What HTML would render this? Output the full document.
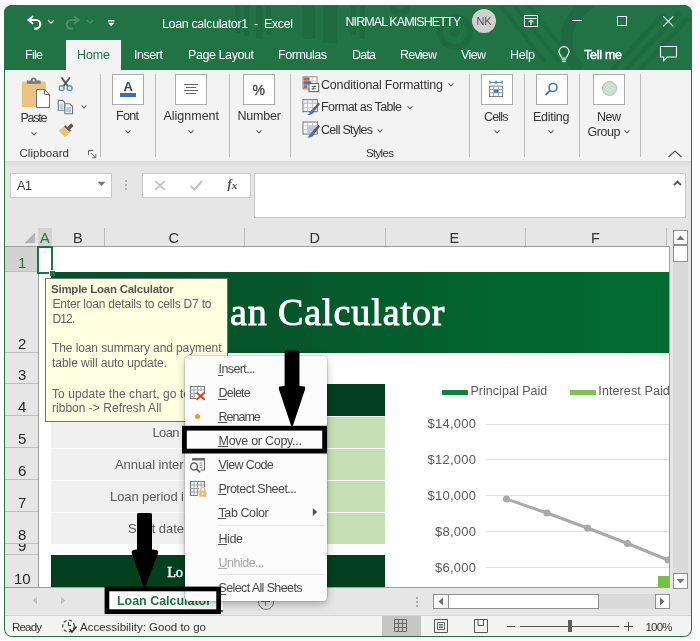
<!DOCTYPE html>
<html>
<head>
<meta charset="utf-8">
<title>Loan calculator1 - Excel</title>
<style>
html,body{margin:0;padding:0;}
body{width:700px;height:641px;overflow:hidden;background:#fdfdfd;font-family:"Liberation Sans",sans-serif;position:relative;}
.abs,.t{position:absolute;}
.t{white-space:pre;line-height:1;color:#262626;}
#win{position:absolute;left:4px;top:5px;width:688px;height:632px;border-radius:8px;overflow:hidden;background:#e6e6e6;}
#pg{position:absolute;left:-4px;top:-5px;width:700px;height:641px;will-change:transform;}
#winborder{position:absolute;left:4px;top:5px;width:686px;height:630px;border:1px solid #217346;border-radius:8px;pointer-events:none;}
.w{color:#fff;}
.sep{position:absolute;width:1px;background:#bdbdbd;top:73.5px;height:83px;}
.bigbtn{position:absolute;top:73px;width:30px;height:29px;background:#fff;border:1px solid #ababab;}
.chev{position:absolute;width:4px;height:4px;border-right:1.3px solid #555;border-bottom:1.3px solid #555;transform:rotate(45deg);}
</style>
</head>
<body>
<div id="win"><div id="pg">
<!-- TITLE + TABS -->
<div id="title" class="abs" style="left:0;top:0;width:700px;height:70px;background:#217346;overflow:hidden;">

<!-- subtle decorative pattern -->
<svg class="abs" style="left:0;top:0" width="700" height="70" viewBox="0 0 700 70">
  <g fill="#1e6b41">
    <rect x="235" y="5" width="5" height="28"/><rect x="244" y="5" width="5" height="31"/><rect x="256" y="5" width="6" height="34"/><rect x="266" y="5" width="5" height="30"/>
    <rect x="302" y="5" width="13" height="34"/><rect x="323" y="5" width="14" height="38"/>
    <rect x="351" y="5" width="5" height="30"/><rect x="360" y="5" width="5" height="34"/>
    <circle cx="455" cy="32" r="5"/>
  </g>
  <g fill="none" stroke="#1e6b41">
    <circle cx="455" cy="32" r="15" stroke-width="6"/>
    <circle cx="400" cy="5" r="8" stroke-width="6"/>
    <path d="M594 0 C 560 20 560 50 580 70" stroke-width="12"/>
    <path d="M500 5 L545 62 M514 5 L559 62 M528 5 L570 58" stroke-width="4"/>
    <path d="M640 70 L688 18 M626 70 L680 12 M612 70 L664 14" stroke-width="5"/>
  </g>
</svg>
<!-- undo -->
<svg class="abs" style="left:26px;top:14px" width="16" height="16" viewBox="0 0 16 16"><path d="M0.8 6 L6.6 1.4 L7.6 2.6 L4.6 6 L7.6 9.4 L6.6 10.6 Z" fill="#fff"/><path d="M3.5 6 H10 A4.3 4.3 0 0 1 10 14.6 H8.3" fill="none" stroke="#fff" stroke-width="2.2"/></svg>
<svg class="abs" style="left:47px;top:19px" width="8" height="6" viewBox="0 0 8 6"><path d="M1 1.2 L4 4.2 L7 1.2" fill="none" stroke="#fff" stroke-width="1.2"/></svg>
<!-- redo (dim) -->
<svg class="abs" style="left:65px;top:14px" width="16" height="16" viewBox="0 0 16 16"><path d="M15.2 6 L9.4 1.4 L8.4 2.6 L11.4 6 L8.4 9.4 L9.4 10.6 Z" fill="#4d9068"/><path d="M12.5 6 H6 A4.3 4.3 0 0 0 6 14.6 H7.7" fill="none" stroke="#4d9068" stroke-width="2.2"/></svg>
<svg class="abs" style="left:86px;top:19px" width="8" height="6" viewBox="0 0 8 6"><path d="M1 1.2 L4 4.2 L7 1.2" fill="none" stroke="#4d9068" stroke-width="1.2"/></svg>
<!-- qat customize -->
<svg class="abs" style="left:106px;top:18px" width="10" height="10" viewBox="0 0 10 10"><path d="M2 2.8 H8.4" stroke="#fff" stroke-width="1.3"/><path d="M2 4.8 H8.4 L5.2 8.2 Z" fill="#fff"/></svg>
<span class="t" style="left:162px;top:17.92px;font-size:12.5px;letter-spacing:-0.374px;color:#fff;">Loan calculator1  -  Excel</span>
<span class="t" style="left:345.5px;top:16.22px;font-size:12.5px;letter-spacing:-0.913px;color:#fff;">NIRMAL KAMISHETTY</span>
<div class="abs" style="left:472px;top:9px;width:24px;height:24px;border-radius:12px;background:#d2d0ce;"></div>
<span class="t" style="left:476.5px;top:16.19px;font-size:11px;letter-spacing:-0.281px;color:#555;">NK</span>
<!-- ribbon display options -->
<svg class="abs" style="left:523px;top:14px" width="16" height="14" viewBox="0 0 16 14"><rect x="1.5" y="1.5" width="13" height="11" fill="none" stroke="#fff" stroke-width="1"/><path d="M1.5 4.5 H14.5" stroke="#fff" stroke-width="1"/><path d="M8 6 V11 M5.6 8.2 L8 5.9 L10.4 8.2" stroke="#fff" stroke-width="1.1" fill="none"/></svg>
<div class="abs" style="left:572px;top:20px;width:10px;height:1px;background:#fff;"></div>
<div class="abs" style="left:617px;top:16.3px;width:8px;height:8px;border:1px solid #fff;"></div>
<svg class="abs" style="left:662px;top:15.2px" width="14" height="14" viewBox="0 0 14 14"><path d="M1.3 1.3 L11.3 11.3 M11.3 1.3 L1.3 11.3" stroke="#fff" stroke-width="1.1"/></svg>
<!-- tabs -->
<div class="abs" style="left:66px;top:40px;width:55px;height:30px;background:#f3f3f3;"></div>
<span class="t" style="left:25px;top:49.42px;font-size:12.5px;letter-spacing:-0.719px;color:#fff;">File</span>
<span class="t" style="left:77px;top:49.42px;font-size:12.5px;letter-spacing:-0.115px;color:#217346;">Home</span>
<span class="t" style="left:134px;top:49.42px;font-size:12.5px;letter-spacing:-0.453px;color:#fff;">Insert</span>
<span class="t" style="left:188px;top:49.42px;font-size:12.5px;letter-spacing:-0.420px;color:#fff;">Page Layout</span>
<span class="t" style="left:278px;top:49.42px;font-size:12.5px;letter-spacing:-0.442px;color:#fff;">Formulas</span>
<span class="t" style="left:352px;top:49.42px;font-size:12.5px;letter-spacing:-0.802px;color:#fff;">Data</span>
<span class="t" style="left:400px;top:49.42px;font-size:12.5px;letter-spacing:-0.800px;color:#fff;">Review</span>
<span class="t" style="left:461px;top:49.42px;font-size:12.5px;letter-spacing:-0.625px;color:#fff;">View</span>
<span class="t" style="left:510px;top:49.42px;font-size:12.5px;letter-spacing:-0.240px;color:#fff;">Help</span>
<!-- bulb -->
<svg class="abs" style="left:556px;top:45px" width="16" height="20" viewBox="0 0 16 20"><path d="M5.6 13 C5.6 10.8 3 9.8 3 6.6 A5 5 0 0 1 13 6.6 C13 9.8 10.4 10.8 10.4 13 Z" fill="none" stroke="#fff" stroke-width="1.1"/><path d="M5.8 14.8 H10.2 M6.3 16.6 H9.7" stroke="#fff" stroke-width="1"/></svg>
<span class="t" style="left:584px;top:49.42px;font-size:12.5px;letter-spacing:-0.266px;color:#fff;-webkit-text-stroke:0.45px #fff;">Tell me</span>
<!-- comment -->
<svg class="abs" style="left:659px;top:45px" width="19" height="18" viewBox="0 0 19 18"><path d="M1.5 1.5 H17.5 V12 H8.2 L4.6 15.6 V12 H1.5 Z" fill="none" stroke="#fff" stroke-width="1.1"/></svg>

</div>
<!-- RIBBON -->
<div id="ribbon" class="abs" style="left:0;top:69.5px;width:700px;height:91.5px;background:#f3f3f3;">
</div>

<div class="abs" id="ribc" style="left:0;top:0.5px;width:700px;height:0;">
<!-- Paste icon -->
<svg class="abs" style="left:20px;top:75px" width="32" height="33" viewBox="0 0 32 33">
  <rect x="1.8" y="5.5" width="24" height="25.5" rx="1.5" fill="#eac282"/>
  <path d="M6.8 7.8 V4.6 H10.6 A3 3 0 0 1 16.6 4.6 H20.6 V7.8 Z" fill="#7a7a7a"/><circle cx="13.6" cy="4.4" r="1.1" fill="#f3f3f3"/>
  <path d="M16.5 13.5 H24.5 L29.5 18.5 V31.5 H16.5 Z" fill="#fff" stroke="#6f6f6f" stroke-width="1"/>
  <path d="M24.5 13.5 V18.5 H29.5" fill="none" stroke="#6f6f6f" stroke-width="1"/>
</svg>
<span class="t" style="left:20.5px;top:111.92px;font-size:12.5px;letter-spacing:-1.242px;color:#333;">Paste</span>
<svg class="abs" style="left:30px;top:130px" width="8" height="6" viewBox="0 0 8 6"><path d="M1.5 1.4 L4 3.9 L6.5 1.4" fill="none" stroke="#606060" stroke-width="1.1"/></svg>
<!-- scissors -->
<svg class="abs" style="left:58px;top:75px" width="16" height="17" viewBox="0 0 16 17">
  <path d="M3.4 1.2 L10.2 10.6 M12 1.2 L5.2 10.6" stroke="#595959" stroke-width="1.9" fill="none"/>
  <circle cx="3.7" cy="12.2" r="2.4" fill="none" stroke="#6a94c9" stroke-width="1.5"/>
  <circle cx="11.6" cy="12.2" r="2.4" fill="none" stroke="#6a94c9" stroke-width="1.5"/>
</svg>
<!-- copy -->
<svg class="abs" style="left:57px;top:98px" width="18" height="17" viewBox="0 0 18 17">
  <path d="M1.3 1.4 H5.6 L7.8 3.6 V11.2 H1.3 Z" fill="#fff" stroke="#737373" stroke-width="1.1"/>
  <path d="M2.6 4.4 H6.4 V10 H2.6 Z" fill="#c2cfdb"/>
  <path d="M7.9 4.8 H12.8 L15.5 7.5 V14.8 H7.9 Z" fill="#fff" stroke="#737373" stroke-width="1.1"/>
  <path d="M9.2 8 H14.2 V13.6 H9.2 Z" fill="#b9c9d8"/>
</svg>
<svg class="abs" style="left:79.6px;top:103px" width="8" height="6" viewBox="0 0 8 6"><path d="M1.5 1.4 L4 3.9 L6.5 1.4" fill="none" stroke="#606060" stroke-width="1.1"/></svg>
<!-- format painter -->
<svg class="abs" style="left:58px;top:121px" width="18" height="17" viewBox="0 0 18 17">
  <path d="M10.6 6.2 L14.4 2.6" stroke="#5a5a5a" stroke-width="3.6" fill="none"/>
  <path d="M7.3 3.2 L13.3 8.2 L11.9 9.9 L5.9 4.9 Z" fill="#5f5f5f"/>
  <path d="M5.7 5.2 L11.7 10.2 L7 15.2 L0.6 8.6 Z" fill="#edc273"/>
</svg>
<span class="t" style="left:19.5px;top:147.77px;font-size:11.5px;letter-spacing:0.033px;color:#333;">Clipboard</span>
<svg class="abs" style="left:88px;top:149px" width="9" height="9" viewBox="0 0 9 9"><path d="M0.5 5 V0.5 H5" fill="none" stroke="#666" stroke-width="1"/><path d="M3 3 L7.5 7.5 M7.8 4 V7.8 H4" fill="none" stroke="#666" stroke-width="1"/></svg>
<div class="sep" style="left:100px"></div>
<!-- Font -->
<div class="bigbtn" style="left:112px"></div>
<span class="t" style="left:123.6px;top:79.60px;font-size:13px;color:#444;font-weight:700;">A</span>
<div class="abs" style="left:119.5px;top:92px;width:16px;height:4px;background:#3b6fb5;"></div>
<span class="t" style="left:116px;top:109.92px;font-size:12.5px;letter-spacing:-0.672px;color:#333;">Font</span>
<svg class="abs" style="left:123.5px;top:128px" width="8" height="6" viewBox="0 0 8 6"><path d="M1.5 1.4 L4 3.9 L6.5 1.4" fill="none" stroke="#606060" stroke-width="1.1"/></svg>
<div class="sep" style="left:155px"></div>
<!-- Alignment -->
<div class="bigbtn" style="left:175px"></div>
<div class="abs" style="left:184px;top:83.5px;width:14px;height:1px;background:#666;"></div>
<div class="abs" style="left:186px;top:86.5px;width:10px;height:1px;background:#666;"></div>
<div class="abs" style="left:184px;top:89.5px;width:14px;height:1px;background:#666;"></div>
<div class="abs" style="left:186px;top:92.5px;width:10px;height:1px;background:#666;"></div>
<span class="t" style="left:163.5px;top:109.92px;font-size:12.5px;letter-spacing:-0.012px;color:#333;">Alignment</span>
<svg class="abs" style="left:187px;top:128px" width="8" height="6" viewBox="0 0 8 6"><path d="M1.5 1.4 L4 3.9 L6.5 1.4" fill="none" stroke="#606060" stroke-width="1.1"/></svg>
<div class="sep" style="left:229px"></div>
<!-- Number -->
<div class="bigbtn" style="left:243px"></div>
<span class="t" style="left:252.5px;top:82.65px;font-size:14px;color:#444;-webkit-text-stroke:0.35px #444;">%</span>
<span class="t" style="left:237.5px;top:109.92px;font-size:12.5px;letter-spacing:-0.194px;color:#333;">Number</span>
<svg class="abs" style="left:255px;top:128px" width="8" height="6" viewBox="0 0 8 6"><path d="M1.5 1.4 L4 3.9 L6.5 1.4" fill="none" stroke="#606060" stroke-width="1.1"/></svg>
<div class="sep" style="left:290px"></div>
<!-- Styles -->
<svg class="abs" style="left:301.8px;top:75px" width="18" height="17" viewBox="0 0 18 17">
  <rect x="1" y="0.8" width="14" height="12.2" fill="#fff" stroke="#8a8a8a" stroke-width="1"/>
  <path d="M5.6 1 V13 M10.4 1 V13 M1 5 H15 M1 9 H15" stroke="#c9c9c9" stroke-width="0.9"/>
  <rect x="1.5" y="1.4" width="6" height="3.3" fill="#d65a38"/><rect x="1.5" y="5.2" width="7.6" height="3.4" fill="#3f74c2"/><rect x="1.5" y="9.1" width="3.6" height="3.4" fill="#d65a38"/>
  <rect x="7" y="7.6" width="9.6" height="8" fill="#fff" stroke="#666" stroke-width="1.1"/>
  <path d="M9.6 10.6 H14 M9.6 12.8 H14 M13 9.4 L10.6 14" stroke="#555" stroke-width="0.9"/>
</svg>
<span class="t" style="left:321px;top:78.42px;font-size:12.5px;letter-spacing:-0.179px;color:#333;">Conditional Formatting</span>
<svg class="abs" style="left:447px;top:81.5px" width="8" height="6" viewBox="0 0 8 6"><path d="M1.5 1.4 L4 3.9 L6.5 1.4" fill="none" stroke="#606060" stroke-width="1.1"/></svg>
<svg class="abs" style="left:301.8px;top:98px" width="19" height="18" viewBox="0 0 19 18">
  <rect x="1" y="0.6" width="14.4" height="12" fill="#fff" stroke="#7d7d7d" stroke-width="1.1"/>
  <rect x="1.6" y="1.2" width="13.2" height="3" fill="#e1e5ea"/>
  <path d="M5.7 0.6 V12.6 M10.5 0.6 V12.6 M1 4.6 H15.4 M1 8.6 H15.4" stroke="#bdbdbd" stroke-width="0.9"/>
  <path d="M16.6 3.4 L18 5 L12.6 11.8 L10.4 10.2 Z" fill="#5c5c5c"/>
  <path d="M10.4 10.2 L12.6 11.8 C12.2 14.6 8.6 16.6 5.2 16 C7.6 14.8 8 11.8 10.4 10.2 Z" fill="#3b78c4"/>
</svg>
<span class="t" style="left:321px;top:100.92px;font-size:12.5px;letter-spacing:-0.600px;color:#333;">Format as Table</span>
<svg class="abs" style="left:405.5px;top:104px" width="8" height="6" viewBox="0 0 8 6"><path d="M1.5 1.4 L4 3.9 L6.5 1.4" fill="none" stroke="#606060" stroke-width="1.1"/></svg>
<svg class="abs" style="left:301.8px;top:120px" width="19" height="18" viewBox="0 0 19 18">
  <rect x="1" y="1" width="14.4" height="12" fill="#fff" stroke="#7d7d7d" stroke-width="1.1"/>
  <rect x="5.6" y="4.8" width="9.2" height="7.6" fill="#bccbe4"/>
  <path d="M5.7 1 V13 M10.5 1 V13 M1 4.8 H15.4 M1 8.8 H15.4" stroke="#c4c4c4" stroke-width="0.9"/>
  <path d="M16.6 3.8 L18 5.4 L12.6 12.2 L10.4 10.6 Z" fill="#5c5c5c"/>
  <path d="M10.4 10.6 L12.6 12.2 C12.2 15 8.6 17 5.2 16.4 C7.6 15.2 8 12.2 10.4 10.6 Z" fill="#3b78c4"/>
</svg>
<span class="t" style="left:321px;top:123.42px;font-size:12.5px;letter-spacing:-0.705px;color:#333;">Cell Styles</span>
<svg class="abs" style="left:376px;top:127px" width="8" height="6" viewBox="0 0 8 6"><path d="M1.5 1.4 L4 3.9 L6.5 1.4" fill="none" stroke="#606060" stroke-width="1.1"/></svg>
<span class="t" style="left:366px;top:147.77px;font-size:11.5px;letter-spacing:-0.666px;color:#333;">Styles</span>
<div class="sep" style="left:469px"></div>
<!-- Cells -->
<div class="bigbtn" style="left:481px"></div>
<svg class="abs" style="left:488px;top:78.5px" width="17" height="19" viewBox="0 0 18 20">
  <path d="M2 3.5 H15 M2 1.5 V5.5 M15 1.5 V5.5 M8.5 1.5 V5.5" stroke="#3b78c4" stroke-width="1" fill="none"/>
  <rect x="1.5" y="7.5" width="14" height="11" fill="#fff" stroke="#777" stroke-width="1"/>
  <path d="M1.5 11 H15.5 M1.5 14.5 H15.5 M6 7.5 V18.5 M11 7.5 V18.5" stroke="#999" stroke-width="1"/>
  <rect x="6.5" y="11.5" width="4.5" height="3" fill="#3b78c4"/>
</svg>
<span class="t" style="left:484px;top:110.42px;font-size:12.5px;letter-spacing:-0.824px;color:#333;">Cells</span>
<svg class="abs" style="left:492.5px;top:128px" width="8" height="6" viewBox="0 0 8 6"><path d="M1.5 1.4 L4 3.9 L6.5 1.4" fill="none" stroke="#606060" stroke-width="1.1"/></svg>
<div class="sep" style="left:524px"></div>
<!-- Editing -->
<div class="bigbtn" style="left:536px"></div>
<svg class="abs" style="left:543px;top:80px" width="17" height="17" viewBox="0 0 17 17"><circle cx="10" cy="6.5" r="4" fill="none" stroke="#3b78c4" stroke-width="1.6"/><path d="M7 9.5 L2.5 14" stroke="#3b78c4" stroke-width="2"/></svg>
<span class="t" style="left:533px;top:110.42px;font-size:12.5px;letter-spacing:-0.289px;color:#333;">Editing</span>
<svg class="abs" style="left:547px;top:128px" width="8" height="6" viewBox="0 0 8 6"><path d="M1.5 1.4 L4 3.9 L6.5 1.4" fill="none" stroke="#606060" stroke-width="1.1"/></svg>
<div class="sep" style="left:579px"></div>
<!-- New Group -->
<div class="bigbtn" style="left:593.4px"></div>
<div class="abs" style="left:601.6px;top:80.8px;width:13px;height:13px;border-radius:9px;background:#c9e0d2;border:1.3px solid #a6c3b2;"></div>
<span class="t" style="left:597px;top:110.42px;font-size:12.5px;letter-spacing:-0.508px;color:#333;">New</span>
<span class="t" style="left:587.5px;top:125.92px;font-size:12.5px;letter-spacing:-0.438px;color:#333;">Group</span>
<svg class="abs" style="left:623px;top:128.5px" width="8" height="6" viewBox="0 0 8 6"><path d="M1.5 1.4 L4 3.9 L6.5 1.4" fill="none" stroke="#606060" stroke-width="1.1"/></svg>
<div class="sep" style="left:640px"></div>
<svg class="abs" style="left:667px;top:148px" width="16" height="10" viewBox="0 0 16 10"><path d="M1.5 8 L8 2 L14.5 8" fill="none" stroke="#555" stroke-width="1.2"/></svg>

</div>
<!-- FORMULA BAR -->

<div class="abs" style="left:0;top:161px;width:700px;height:6px;background:linear-gradient(180deg,#dadada,#e6e6e6);"></div>
<!-- name box -->
<div class="abs" style="left:10px;top:172.5px;width:100px;height:23.5px;background:#fff;border:1px solid #c8c8c8;"></div>
<span class="t" style="left:17px;top:179.92px;font-size:12.5px;letter-spacing:-0.297px;color:#333;">A1</span>
<svg class="abs" style="left:97px;top:181px" width="9" height="6" viewBox="0 0 9 6"><path d="M0.5 0.8 H8.5 L4.5 5 Z" fill="#777"/></svg>
<div class="abs" style="left:125px;top:180px;width:2px;height:2px;background:#b0b0b0;"></div>
<div class="abs" style="left:125px;top:184px;width:2px;height:2px;background:#b0b0b0;"></div>
<div class="abs" style="left:125px;top:188px;width:2px;height:2px;background:#b0b0b0;"></div>
<!-- fx box -->
<div class="abs" style="left:141.5px;top:172.5px;width:107.5px;height:23.5px;background:#fff;border:1px solid #c8c8c8;"></div>
<svg class="abs" style="left:154px;top:179px" width="12" height="12" viewBox="0 0 12 12"><path d="M1.2 1.8 L10.8 10.8 M10.8 1.8 L1.2 10.8" stroke="#c3c3c3" stroke-width="1.8"/></svg>
<svg class="abs" style="left:189px;top:179px" width="14" height="12" viewBox="0 0 14 12"><path d="M1.6 6.8 L5.6 10.6 L13 2" stroke="#c6c6c6" stroke-width="2.3" fill="none"/></svg>
<span class="t" style="left:227.5px;top:177.72px;font-size:12.5px;color:#4e4e4e;font-family:'Liberation Serif';font-style:italic;font-weight:700;">f</span>
<span class="t" style="left:231.8px;top:180.29px;font-size:11px;letter-spacing:0.700px;color:#4e4e4e;font-family:'Liberation Serif';font-style:italic;font-weight:700;">x</span>
<!-- formula input -->
<div class="abs" style="left:254px;top:172.5px;width:430px;height:43.5px;background:#fff;border:1px solid #c8c8c8;"></div>
<svg class="abs" style="left:673px;top:180px" width="9" height="6" viewBox="0 0 9 6"><path d="M1 5.2 L4.5 1.7 L8 5.2" stroke="#555" stroke-width="1.9" fill="none"/></svg>

<!-- SHEET -->

<!-- sheet white -->
<div class="abs" style="left:38px;top:247px;width:631px;height:340px;background:#fff;"></div>
<!-- column header -->
<div class="abs" style="left:5px;top:246px;width:665px;height:1px;background:#9e9e9e;"></div>
<div class="abs" style="left:38px;top:228px;width:14px;height:18px;background:#d2d2d2;"></div>
<svg class="abs" style="left:23px;top:232px" width="13" height="12" viewBox="0 0 13 12"><path d="M12 0.5 V11 H1.5 Z" fill="#b4b4b4"/></svg>
<span class="t" style="left:40px;top:231.23px;font-size:14.5px;color:#217346;">A</span>
<span class="t" style="left:73px;top:231.23px;font-size:14.5px;color:#333;">B</span>
<span class="t" style="left:168.5px;top:231.23px;font-size:14.5px;color:#333;">C</span>
<span class="t" style="left:309.5px;top:231.23px;font-size:14.5px;color:#333;">D</span>
<span class="t" style="left:449.5px;top:231.23px;font-size:14.5px;color:#333;">E</span>
<span class="t" style="left:591px;top:231.23px;font-size:14.5px;color:#333;">F</span>
<div class="abs" style="left:103.5px;top:228px;width:1px;height:18px;background:#bcbcbc;"></div>
<div class="abs" style="left:244px;top:228px;width:1px;height:18px;background:#bcbcbc;"></div>
<div class="abs" style="left:385px;top:228px;width:1px;height:18px;background:#bcbcbc;"></div>
<div class="abs" style="left:525px;top:228px;width:1px;height:18px;background:#bcbcbc;"></div>
<div class="abs" style="left:666px;top:228px;width:1px;height:18px;background:#bcbcbc;"></div>
<!-- row headers -->
<div class="abs" style="left:5px;top:247px;width:33px;height:340px;background:#e6e6e6;"></div>
<div class="abs" style="left:5px;top:247px;width:33px;height:24px;background:#d2d2d2;border-bottom:1px solid #bdbdbd;overflow:hidden;"><span class="t" style="left:13.1px;top:8.30px;font-size:15px;color:#217346;">1</span></div>
<div class="abs" style="left:5px;top:272px;width:33px;height:80px;border-bottom:1px solid #bdbdbd;overflow:hidden;"><span class="t" style="left:13.1px;top:64.30px;font-size:15px;color:#262626;">2</span></div>
<div class="abs" style="left:5px;top:353px;width:33px;height:30px;border-bottom:1px solid #bdbdbd;overflow:hidden;"><span class="t" style="left:13.1px;top:14.30px;font-size:15px;color:#262626;">3</span></div>
<div class="abs" style="left:5px;top:384px;width:33px;height:31px;border-bottom:1px solid #bdbdbd;overflow:hidden;"><span class="t" style="left:13.1px;top:15.30px;font-size:15px;color:#262626;">4</span></div>
<div class="abs" style="left:5px;top:416px;width:33px;height:31px;border-bottom:1px solid #bdbdbd;overflow:hidden;"><span class="t" style="left:13.1px;top:15.30px;font-size:15px;color:#262626;">5</span></div>
<div class="abs" style="left:5px;top:448px;width:33px;height:31px;border-bottom:1px solid #bdbdbd;overflow:hidden;"><span class="t" style="left:13.1px;top:15.30px;font-size:15px;color:#262626;">6</span></div>
<div class="abs" style="left:5px;top:480px;width:33px;height:31px;border-bottom:1px solid #bdbdbd;overflow:hidden;"><span class="t" style="left:13.1px;top:15.30px;font-size:15px;color:#262626;">7</span></div>
<div class="abs" style="left:5px;top:512px;width:33px;height:31px;border-bottom:1px solid #bdbdbd;overflow:hidden;"><span class="t" style="left:13.1px;top:15.30px;font-size:15px;color:#262626;">8</span></div>
<div class="abs" style="left:5px;top:544px;width:33px;height:10px;border-bottom:1px solid #bdbdbd;overflow:hidden;"><span class="t" style="left:13.1px;top:-5.70px;font-size:15px;color:#262626;">9</span></div>
<div class="abs" style="left:5px;top:555px;width:33px;height:32px;overflow:hidden;"><span class="t" style="left:9.0px;top:16.30px;font-size:15px;color:#262626;">10</span></div>

<div class="abs" style="left:38px;top:247px;width:1px;height:340px;background:#9e9e9e;"></div>
<!-- banner -->
<div class="abs" style="left:51.4px;top:272px;width:617.6px;height:81px;background:linear-gradient(90deg,#07512a 0%,#06552b 35%,#03662f 75%,#026c33 100%);"></div>
<span class="t" style="left:230px;top:293.33px;font-size:38px;letter-spacing:0.905px;color:#fff;font-family:'Liberation Serif';-webkit-text-stroke:0.9px #fff;">an Calculator</span>
<!-- table cells -->
<div class="abs" style="left:51.4px;top:384px;width:333.6px;height:32px;background:#02401f;"></div>
<div class="abs" style="left:51.4px;top:417px;width:192.6px;height:31px;background:#f0f0f0;"></div>
<div class="abs" style="left:51.4px;top:449px;width:192.6px;height:31px;background:#f0f0f0;"></div>
<div class="abs" style="left:51.4px;top:481px;width:192.6px;height:31px;background:#f0f0f0;"></div>
<div class="abs" style="left:51.4px;top:513px;width:192.6px;height:31px;background:#f0f0f0;"></div>
<div class="abs" style="left:244px;top:417px;width:141px;height:31px;background:#c6e0b4;"></div>
<div class="abs" style="left:244px;top:449px;width:141px;height:31px;background:#c6e0b4;"></div>
<div class="abs" style="left:244px;top:481px;width:141px;height:31px;background:#c6e0b4;"></div>
<div class="abs" style="left:244px;top:513px;width:141px;height:31px;background:#c6e0b4;"></div>
<span class="t" style="left:152.5px;top:426.00px;font-size:13px;letter-spacing:-0.641px;color:#595959;">Loan</span>
<span class="t" style="left:115px;top:458.00px;font-size:13px;letter-spacing:-0.081px;color:#595959;">Annual inter</span>
<span class="t" style="left:110px;top:490.00px;font-size:13px;letter-spacing:-0.098px;color:#595959;">Loan period i</span>
<span class="t" style="left:128px;top:522.00px;font-size:13px;letter-spacing:-0.042px;color:#595959;">Start date</span>
<div class="abs" style="left:51.4px;top:555px;width:333.6px;height:32px;background:#02401f;"></div>
<span class="t" style="left:167.3px;top:565.03px;font-size:14.5px;letter-spacing:-0.409px;color:#fff;font-family:'Liberation Serif';-webkit-text-stroke:0.4px #fff;">Lo</span>
<!-- chart -->
<div class="abs" style="left:442px;top:389.5px;width:25.5px;height:5px;background:#0f8141;"></div>
<span class="t" style="left:470.5px;top:384.92px;font-size:12.5px;letter-spacing:0.028px;color:#595959;">Principal Paid</span>
<div class="abs" style="left:570px;top:389.5px;width:26px;height:5px;background:#7dc353;"></div>
<div class="abs" style="left:598px;top:380px;width:71px;height:22px;overflow:hidden;"><span class="t" style="left:0.3px;top:4.92px;font-size:12.5px;letter-spacing:0.109px;color:#595959;">Interest Paid</span></div>
<div class="abs" style="left:486px;top:423.5px;width:183px;height:1px;background:#e0e0e0;"></div>
<div class="abs" style="left:486px;top:459.4px;width:183px;height:1px;background:#e0e0e0;"></div>
<div class="abs" style="left:486px;top:495.2px;width:183px;height:1px;background:#e0e0e0;"></div>
<div class="abs" style="left:486px;top:531.1px;width:183px;height:1px;background:#e0e0e0;"></div>
<div class="abs" style="left:486px;top:567.0px;width:183px;height:1px;background:#e0e0e0;"></div>
<span class="t" style="left:427.5px;top:416.90px;font-size:13px;letter-spacing:0.250px;color:#595959;">$14,000</span>
<span class="t" style="left:427.5px;top:452.80px;font-size:13px;letter-spacing:0.250px;color:#595959;">$12,000</span>
<span class="t" style="left:427.5px;top:488.70px;font-size:13px;letter-spacing:0.250px;color:#595959;">$10,000</span>
<span class="t" style="left:435px;top:524.60px;font-size:13px;letter-spacing:0.247px;color:#595959;">$8,000</span>
<span class="t" style="left:435px;top:560.50px;font-size:13px;letter-spacing:0.247px;color:#595959;">$6,000</span>
<svg class="abs" style="left:486px;top:480px" width="183" height="107" viewBox="486 480 183 107">
  <polyline points="506.5,499 547,513 587.5,528 627.5,543.5 668,560" fill="none" stroke="#a9a9a9" stroke-width="3" stroke-linejoin="round"/>
  <g fill="#a9a9a9"><circle cx="506.5" cy="499" r="3.6"/><circle cx="547" cy="513" r="3.6"/><circle cx="587.5" cy="528" r="3.6"/><circle cx="627.5" cy="543.5" r="3.6"/><circle cx="668" cy="560" r="3.6"/></g>
</svg>
<div class="abs" style="left:658px;top:576px;width:11px;height:11px;background:#77c043;"></div>
<!-- selection A1 -->
<div class="abs" style="left:37px;top:246px;width:12px;height:24px;border:2px solid #217346;"></div>
<div class="abs" style="left:49px;top:270px;width:5px;height:5px;background:#217346;border:1px solid #fff;border-right:none;border-bottom:none;"></div>
<!-- sheet borders -->
<div class="abs" style="left:669px;top:246px;width:1px;height:342px;background:#9e9e9e;"></div>
<div class="abs" style="left:5px;top:587px;width:665px;height:1px;background:#9e9e9e;"></div>
<!-- v scrollbar -->
<div class="abs" style="left:673px;top:230px;width:15px;height:359px;background:#dadada;"></div>
<div class="abs" style="left:673px;top:230px;width:13px;height:13px;background:#fff;border:1px solid #8f8f8f;"></div>
<svg class="abs" style="left:676px;top:234px" width="9" height="7" viewBox="0 0 9 7"><path d="M0.5 6 L4.5 1.5 L8.5 6 Z" fill="#777"/></svg>
<div class="abs" style="left:673px;top:245px;width:13px;height:15px;background:#fff;border:1px solid #8f8f8f;"></div>
<div class="abs" style="left:673px;top:573px;width:13px;height:14px;background:#fff;border:1px solid #8f8f8f;"></div>
<svg class="abs" style="left:676px;top:578px" width="9" height="7" viewBox="0 0 9 7"><path d="M0.5 1 L4.5 5.5 L8.5 1 Z" fill="#777"/></svg>

<!-- TAB BAR -->

<svg class="abs" style="left:32px;top:596px" width="6" height="9" viewBox="0 0 6 9"><path d="M5 0.5 V8.5 L0.8 4.5 Z" fill="#c3c3c3"/></svg>
<svg class="abs" style="left:60px;top:596px" width="6" height="9" viewBox="0 0 6 9"><path d="M1 0.5 V8.5 L5.2 4.5 Z" fill="#c3c3c3"/></svg>
<div class="abs" style="left:107px;top:588px;width:116px;height:22px;background:#fff;border-bottom:2px solid #217346;"></div>
<span class="t" style="left:117px;top:594.92px;font-size:12.5px;letter-spacing:-0.033px;color:#217346;font-weight:700;">Loan Calculator</span>
<div class="abs" style="left:258px;top:594px;width:14px;height:14px;border-radius:8px;border:1px solid #767676;"></div>
<div class="abs" style="left:265px;top:598px;width:1px;height:8px;background:#767676;"></div>
<div class="abs" style="left:261px;top:601px;width:9px;height:1px;background:#767676;"></div>
<div class="abs" style="left:416px;top:597px;width:2px;height:2px;background:#b0b0b0;"></div>
<div class="abs" style="left:416px;top:601px;width:2px;height:2px;background:#b0b0b0;"></div>
<div class="abs" style="left:416px;top:605px;width:2px;height:2px;background:#b0b0b0;"></div>
<!-- h scrollbar -->
<div class="abs" style="left:433px;top:594px;width:237px;height:15px;background:#dadada;"></div>
<div class="abs" style="left:433px;top:594px;width:14px;height:13px;background:#fff;border:1px solid #8f8f8f;"></div>
<svg class="abs" style="left:437px;top:597px" width="7" height="9" viewBox="0 0 7 9"><path d="M6 0.5 V8.5 L1.5 4.5 Z" fill="#6e6e6e"/></svg>
<div class="abs" style="left:448px;top:594px;width:149px;height:13px;background:#fff;border:1px solid #8f8f8f;"></div>
<div class="abs" style="left:655px;top:594px;width:13px;height:13px;background:#fff;border:1px solid #8f8f8f;"></div>
<svg class="abs" style="left:659px;top:597px" width="7" height="9" viewBox="0 0 7 9"><path d="M1 0.5 V8.5 L5.5 4.5 Z" fill="#6e6e6e"/></svg>

<!-- STATUS BAR -->

<div class="abs" style="left:0;top:615px;width:700px;height:26px;background:#f3f3f3;"></div>
<div class="abs" style="left:0;top:615px;width:700px;height:1px;background:#d4d4d4;"></div>
<span class="t" style="left:12px;top:621.77px;font-size:11.5px;letter-spacing:-0.812px;color:#333;">Ready</span>
<svg class="abs" style="left:61px;top:618px" width="17" height="17" viewBox="0 0 17 17">
  <circle cx="7.5" cy="8" r="5.8" fill="none" stroke="#444" stroke-width="1.2" stroke-dasharray="3.2 2.2"/>
  <path d="M7.5 4 V7.5 H10" fill="none" stroke="#444" stroke-width="1.1"/>
  <path d="M8.5 11 L11 14 L15.5 8.5" fill="none" stroke="#333" stroke-width="1.6"/>
</svg>
<span class="t" style="left:80px;top:621.77px;font-size:11.5px;letter-spacing:0.003px;color:#333;">Accessibility: Good to go</span>
<div class="abs" style="left:382px;top:616px;width:39px;height:20px;background:#c6c6c6;"></div>
<svg class="abs" style="left:394px;top:619px" width="14" height="14" viewBox="0 0 14 14"><path d="M0.5 0.5 H12.5 V12.5 H0.5 Z M0.5 4.5 H12.5 M0.5 8.5 H12.5 M4.5 0.5 V12.5 M8.5 0.5 V12.5" fill="none" stroke="#6a6a6a" stroke-width="1"/></svg>
<svg class="abs" style="left:434px;top:619px" width="14" height="14" viewBox="0 0 14 14"><path d="M0.5 0.5 H13.5 V13.5 H0.5 Z" fill="none" stroke="#555" stroke-width="1"/><path d="M3.5 3.5 H10.5 V10.5 H3.5 Z M5 5.5 H9 M5 7 H9 M5 8.5 H9" fill="none" stroke="#555" stroke-width="0.9"/></svg>
<svg class="abs" style="left:474px;top:619px" width="14" height="14" viewBox="0 0 14 14"><path d="M0.5 0.5 H13.5 V13.5 H0.5 Z" fill="none" stroke="#555" stroke-width="1"/><path d="M4 0.5 V6.5 H9.5 V0.5" fill="none" stroke="#555" stroke-width="1"/></svg>
<div class="abs" style="left:507px;top:626px;width:8px;height:1px;background:#444;"></div>
<div class="abs" style="left:520px;top:626px;width:99px;height:1px;background:#555;"></div>
<div class="abs" style="left:568px;top:620px;width:4px;height:12px;background:#5e5e5e;"></div>
<div class="abs" style="left:624px;top:626px;width:9px;height:1px;background:#444;"></div>
<div class="abs" style="left:628px;top:622px;width:1px;height:9px;background:#444;"></div>
<span class="t" style="left:645.5px;top:621.77px;font-size:11.5px;letter-spacing:-0.807px;color:#333;">100%</span>

<!-- OVERLAYS -->

<!-- tooltip -->
<div class="abs" style="left:45px;top:278px;width:180.5px;height:141.5px;background:#ffffe1;border:1px solid #707070;"></div>
<span class="t" style="left:51px;top:284.27px;font-size:11.5px;letter-spacing:-0.243px;color:#555;font-weight:700;">Simple Loan Calculator</span>
<span class="t" style="left:52.5px;top:298.34px;font-size:12px;letter-spacing:-0.201px;color:#626262;">Enter loan details to cells D7 to</span>
<span class="t" style="left:52.5px;top:312.84px;font-size:12px;letter-spacing:-0.953px;color:#626262;">D12.</span>
<span class="t" style="left:52px;top:342.34px;font-size:12px;letter-spacing:-0.096px;color:#626262;">The loan summary and payment</span>
<span class="t" style="left:52px;top:357.34px;font-size:12px;letter-spacing:-0.050px;color:#626262;">table will auto update.</span>
<span class="t" style="left:52px;top:387.84px;font-size:12px;letter-spacing:0.076px;color:#626262;">To update the chart, go to</span>
<span class="t" style="left:52px;top:402.34px;font-size:12px;letter-spacing:0.022px;color:#626262;">ribbon -&gt; Refresh All</span>
<!-- context menu -->
<div class="abs" style="left:184.5px;top:355.5px;width:142px;height:245px;background:#fcfcfc;border-radius:4px;box-shadow:0 0 0 0.8px rgba(0,0,0,0.14),0 3px 9px rgba(0,0,0,0.28);"></div>
<span class="t" style="left:218.5px;top:363.42px;font-size:12.5px;letter-spacing:-0.586px;color:#48484c;">Insert...</span>
<div class="abs" style="left:218px;top:374.5px;width:4.5px;height:1px;background:#555;"></div>
<span class="t" style="left:218.5px;top:387.42px;font-size:12.5px;letter-spacing:-0.778px;color:#48484c;">Delete</span>
<div class="abs" style="left:218px;top:398.5px;width:8.5px;height:1px;background:#555;"></div>
<span class="t" style="left:218.5px;top:410.92px;font-size:12.5px;letter-spacing:-1.000px;color:#48484c;">Rename</span>
<div class="abs" style="left:218px;top:422.0px;width:8.5px;height:1px;background:#555;"></div>
<span class="t" style="left:218.5px;top:434.92px;font-size:12.5px;letter-spacing:-0.272px;color:#48484c;">Move or Copy...</span>
<div class="abs" style="left:218px;top:446.0px;width:10px;height:1px;background:#555;"></div>
<span class="t" style="left:218.5px;top:458.92px;font-size:12.5px;letter-spacing:-0.623px;color:#48484c;">View Code</span>
<div class="abs" style="left:218px;top:470.0px;width:8px;height:1px;background:#555;"></div>
<span class="t" style="left:218.5px;top:482.92px;font-size:12.5px;letter-spacing:-0.528px;color:#48484c;">Protect Sheet...</span>
<div class="abs" style="left:218px;top:494.0px;width:8px;height:1px;background:#555;"></div>
<span class="t" style="left:218.5px;top:506.92px;font-size:12.5px;letter-spacing:-0.406px;color:#48484c;">Tab Color</span>
<div class="abs" style="left:218px;top:518.0px;width:7.5px;height:1px;background:#555;"></div>
<span class="t" style="left:218.5px;top:532.92px;font-size:12.5px;letter-spacing:-0.406px;color:#48484c;">Hide</span>
<div class="abs" style="left:218px;top:544.0px;width:9px;height:1px;background:#555;"></div>
<span class="t" style="left:218.5px;top:556.92px;font-size:12.5px;letter-spacing:-0.504px;color:#a6a6a6;">Unhide...</span>
<div class="abs" style="left:218px;top:568.0px;width:9px;height:1px;background:#b0b0b0;"></div>
<span class="t" style="left:218.5px;top:582.42px;font-size:12.5px;letter-spacing:-0.613px;color:#48484c;">Select All Sheets</span>
<div class="abs" style="left:218px;top:593.5px;width:8px;height:1px;background:#555;"></div>

<div class="abs" style="left:218px;top:525px;width:107px;height:1px;background:#e5e5e5;"></div>
<div class="abs" style="left:218px;top:574px;width:107px;height:1px;background:#e5e5e5;"></div>
<svg class="abs" style="left:312px;top:507px" width="6" height="10" viewBox="0 0 6 10"><path d="M0.8 1 V9 L5.2 5 Z" fill="#555"/></svg>
<!-- delete icon -->
<svg class="abs" style="left:189px;top:385px" width="19" height="18" viewBox="0 0 19 18">
  <path d="M1.5 1.5 H15.5 V8 M1.5 1.5 V13.5 H7" fill="none" stroke="#7a7a7a" stroke-width="1.2"/>
  <path d="M1.5 5 H15.5 M1.5 8.5 H8 M1.5 11.5 H6 M5 1.5 V13 M8.5 1.5 V7 M12 1.5 V6" stroke="#a5a5a5" stroke-width="1" fill="none"/>
  <path d="M7.5 7.5 L15.8 14.8 M15.8 7.5 L7.5 14.8" stroke="#d04a35" stroke-width="2.1" fill="none"/>
</svg>
<div class="abs" style="left:194.8px;top:413.8px;width:5.4px;height:5.4px;border-radius:3px;background:#f0981c;"></div>
<!-- view code icon -->
<svg class="abs" style="left:188px;top:457px" width="19" height="18" viewBox="0 0 19 18">
  <path d="M4 1 H17 V3.5 H4 Z" fill="#6a6a6a"/>
  <path d="M16.5 3 V13 H12.5" fill="none" stroke="#6a6a6a" stroke-width="1.1"/>
  <path d="M11.5 6 H14.5 M11.5 8.2 H14.5 M11.5 10.4 H14.5" stroke="#8a8a8a" stroke-width="1"/>
  <circle cx="6" cy="9.5" r="3.4" fill="#fcfcfc" stroke="#666" stroke-width="1.5"/>
  <path d="M8.5 12 L12 15.4" stroke="#666" stroke-width="1.9"/>
</svg>
<!-- protect icon -->
<svg class="abs" style="left:189px;top:480px" width="19" height="18" viewBox="0 0 19 18">
  <path d="M1.5 1.5 H15.5 V7 M1.5 1.5 V15.5 H9" fill="none" stroke="#7a7a7a" stroke-width="1.2"/>
  <path d="M1.5 5 H15.5 M1.5 8.5 H10 M1.5 12 H10 M5 1.5 V15.5 M8.5 1.5 V15.5 M12 1.5 V7" stroke="#a0a0a0" stroke-width="1" fill="none"/>
  <path d="M11.8 11 V9.3 A2 2 0 0 1 15.8 9.3 V11" fill="none" stroke="#e3bd7a" stroke-width="1.3"/>
  <rect x="10.3" y="10.6" width="7" height="6.2" rx="0.8" fill="#e3bd7a"/>
  <rect x="13.4" y="12.4" width="1" height="2.6" fill="#fff"/>
</svg>
<!-- annotations -->
<svg class="abs" style="left:175px;top:420px" width="160" height="40" viewBox="175 420 160 40"><rect x="184.4" y="428.2" width="140.2" height="22.9" fill="none" stroke="#000" stroke-width="4.8"/></svg>
<svg class="abs" style="left:270px;top:345px" width="45" height="85" viewBox="270 345 45 85">
  <path d="M286 350.5 Q284.6 350.5 284.6 352 V386 L279.5 386.5 Q278.2 387.5 279 389.5 L291.2 426 H292.8 L305 389.5 Q305.8 387.5 304.5 386.5 L299.5 386 V352 Q299.5 350.5 298 350.5 Z" fill="#000"/>
</svg>
<svg class="abs" style="left:100px;top:580px" width="130" height="40" viewBox="100 580 130 40"><rect x="106.95" y="588.95" width="111.7" height="22.7" fill="none" stroke="#000" stroke-width="4.7"/></svg>
<svg class="abs" style="left:125px;top:508px" width="40" height="82" viewBox="125 508 40 82">
  <path d="M138.5 513 Q137 513 137 514.5 V549.5 L133 550 Q131 551.5 131.8 553.5 L143.6 587 H145.4 L158 553.5 Q158.8 551.5 157 550 L152 549.5 V514.5 Q152 513 150.5 513 Z" fill="#000"/>
</svg>

</div></div>
<div id="winborder"></div>
</body>
</html>
